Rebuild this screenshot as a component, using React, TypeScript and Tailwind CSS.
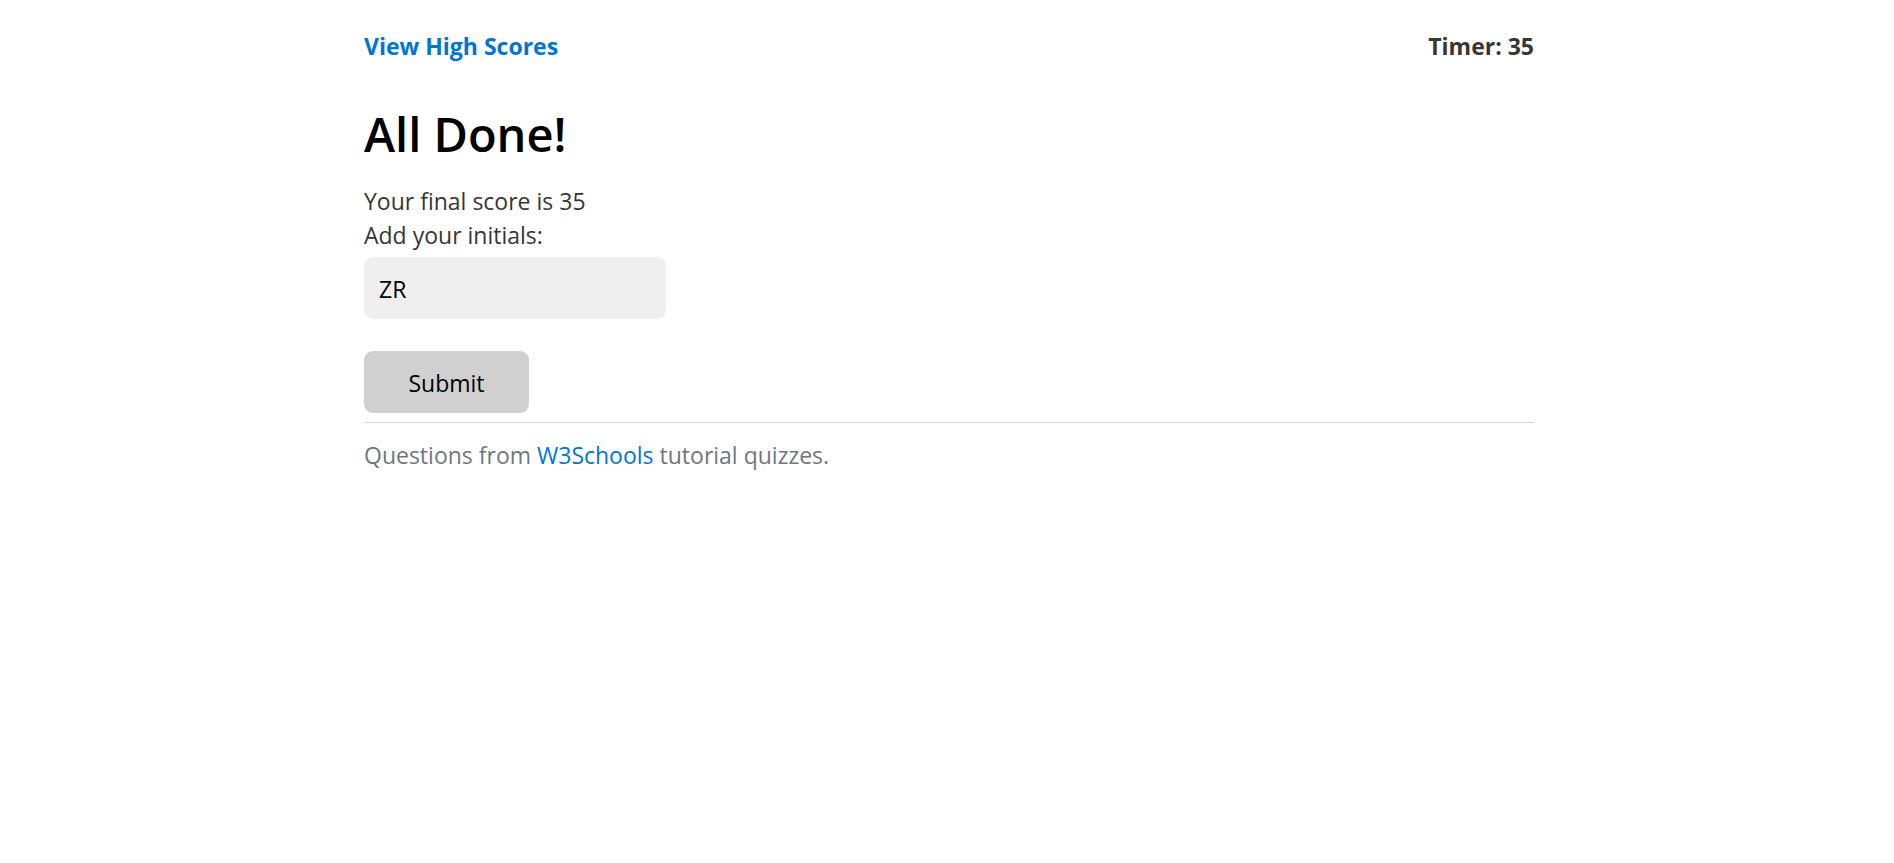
export default function App() {
  return (
    <div className="mx-auto max-w-[1174px] pl-1 font-['Open_Sans','Noto_Sans',sans-serif] text-[23px]/[34px] text-[#363636]">
      <header className="flex items-center justify-between pt-[29px] font-bold">
        <a href="#scores" className="text-[#0076d1]">View High Scores</a>
        <p>Timer: 35</p>
      </header>
      <main>
        <h1 className="mt-10 mb-[19px] text-[47px]/[62px] font-semibold text-black">All Done!</h1>
        <p>Your final score is 35</p>
        <form onSubmit={(e) => e.preventDefault()}>
          <label htmlFor="initials" className="block">Add your initials:</label>
          <input id="initials" defaultValue="ZR" className="mt-[5px] block h-[62px] w-[302px] rounded-[9px] bg-[#efefef] px-[15px] pt-[2px] text-black" />
          <button className="mt-8 block h-[62px] w-[165px] rounded-[9px] bg-[#d0d0d0] pt-[2px] text-black">Submit</button>
        </form>
      </main>
      <footer className="mt-[9px] border-t border-[#d8d8d8] pt-[15px] text-[#70777f]">
        Questions from <a href="https://www.w3schools.com" className="text-[#0076d1]">W3Schools</a> tutorial quizzes.
      </footer>
    </div>
  );
}
